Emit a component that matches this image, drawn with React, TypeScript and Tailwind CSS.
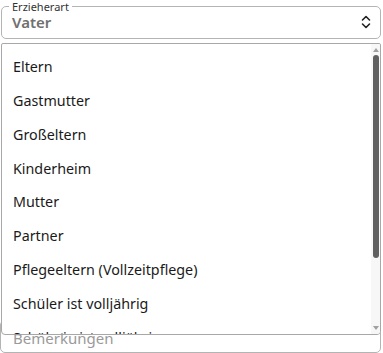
const options = [
  "Eltern",
  "Gastmutter",
  "Großeltern",
  "Kinderheim",
  "Mutter",
  "Partner",
  "Pflegeeltern (Vollzeitpflege)",
  "Schüler ist volljährig",
  "Schülerin ist volljährig",
  "Sonstige",
];

export default function App() {
  return (
    <div
      className="relative w-[383px] h-[353px] bg-white overflow-hidden text-[#1a1a1a] flex flex-col pl-[1px] pr-[2px] pt-[1px]"
      style={{ fontFamily: '"Noto Sans", "Open Sans", sans-serif' }}
    >
      {/* Erzieherart select */}
      <fieldset className="h-[38px] border border-[#b4b4b4] rounded-[5px] px-[7px] m-0 shrink-0">
        <legend className="px-[3px] text-[11px] leading-[11px] text-[#333]">Erzieherart</legend>
        <div className="flex items-center justify-between h-[20px] pl-[3px] pr-[2px]">
          <span className="text-[15px] font-semibold text-[#707070]">Vater</span>
          <svg width="10" height="14" viewBox="0 0 10 14" fill="none" stroke="#222" strokeWidth="1.6" strokeLinecap="round" strokeLinejoin="round">
            <path d="M1.5 5 L5 1.5 L8.5 5" />
            <path d="M1.5 9 L5 12.5 L8.5 9" />
          </svg>
        </div>
      </fieldset>

      {/* Bemerkungen textarea underneath */}
      <div className="mt-[281px] -ml-[1px] h-[33px] border border-[#b4b4b4] rounded-[5px] pl-[12px] pt-[5px]">
        <span className="relative z-20 text-[15px] leading-[20px] text-[#9a9a9a]">Bemerkungen</span>
      </div>

      {/* Open option list */}
      <div className="absolute top-[43px] left-[1px] w-[380px] h-[292px] bg-white border border-[#a8a8a8] rounded-b-[4px] rounded-t-[2px] overflow-hidden z-10">
        <div className="pt-[6px] flex flex-col">
          {options.map((o) => (
            <div key={o} className="h-[33.8px] flex items-center pl-[11px] text-[14.3px]">
              {o}
            </div>
          ))}
        </div>
        <div className="absolute top-0 right-0 w-[9px] h-full bg-[#f7f7f7] flex flex-col items-center">
          <svg className="mt-[4px]" width="6" height="4" viewBox="0 0 6 4">
            <path d="M0 4 L3 0 L6 4 Z" fill="#a0a0a0" />
          </svg>
          <div className="mt-[3px] w-[6px] h-[203px] rounded-[3px] bg-[#606060]" />
          <div className="flex-1" />
          <svg className="mb-[4px]" width="6" height="4" viewBox="0 0 6 4">
            <path d="M0 0 L6 0 L3 4 Z" fill="#a0a0a0" />
          </svg>
        </div>
      </div>
    </div>
  );
}
